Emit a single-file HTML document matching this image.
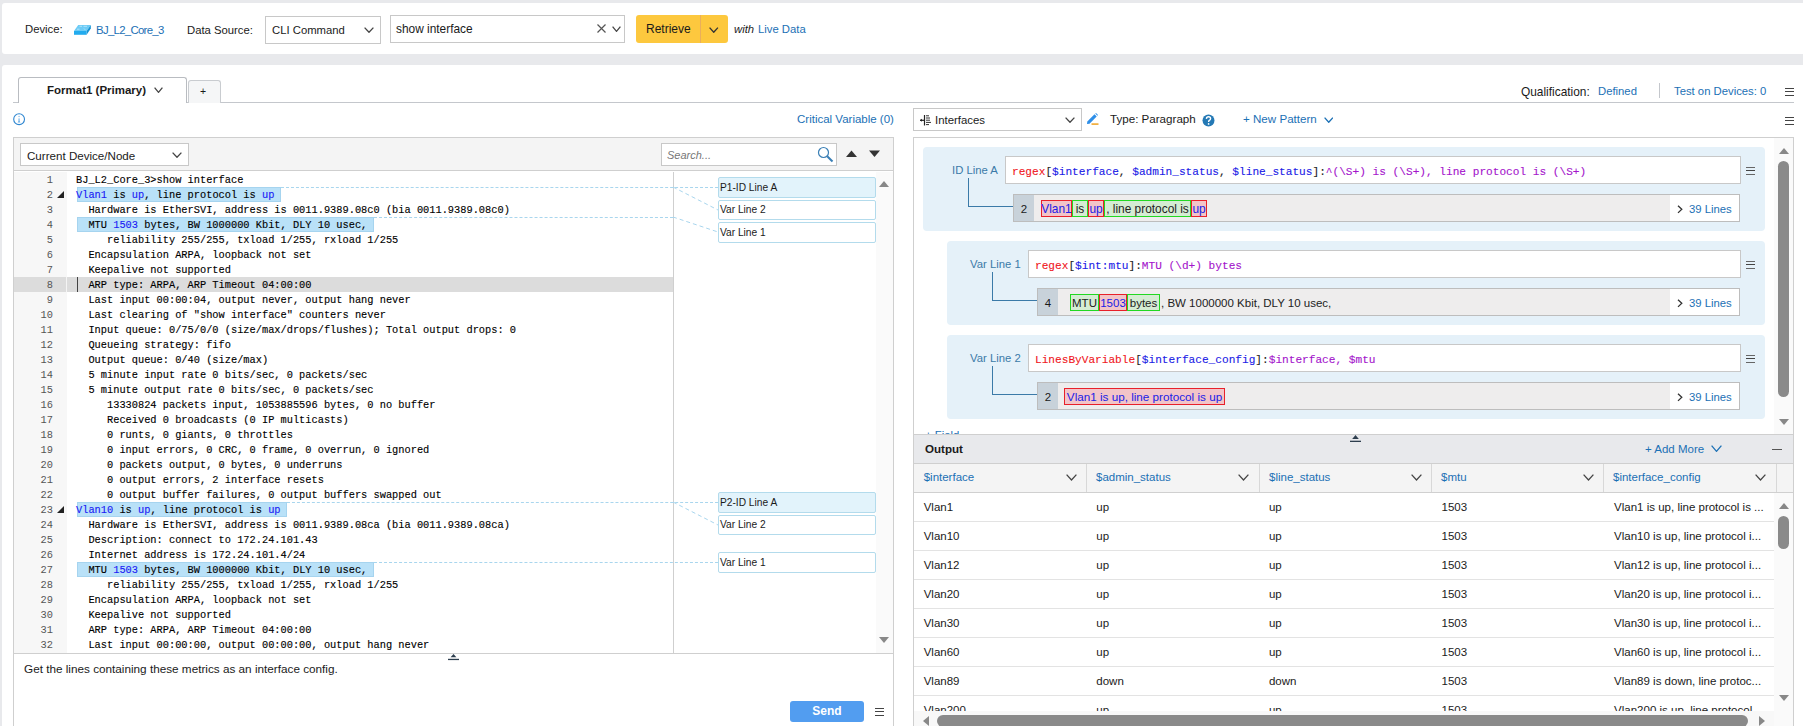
<!DOCTYPE html>
<html><head><meta charset="utf-8">
<style>
*{margin:0;padding:0;box-sizing:border-box}
html,body{width:1803px;height:726px;overflow:hidden;background:#e8e9ec;font-family:"Liberation Sans",sans-serif;font-size:11.3px;color:#1a1a1a}
.a{position:absolute}
.t{position:absolute;white-space:nowrap;line-height:14px}
.lnk{color:#1b70b5}
.box{position:absolute;border:1px solid #c8c8c8;background:#fff}
.chev{position:absolute;width:6px;height:6px;border-right:1.3px solid #444;border-bottom:1.3px solid #444;transform:rotate(45deg)}
.ham{position:absolute;width:9px;height:8.4px;border-top:1.4px solid #444;border-bottom:1.4px solid #444}
.ham:after{content:"";position:absolute;left:0;right:0;top:2.1px;height:1.4px;background:#444}
.mono{font-family:"Liberation Mono",monospace;-webkit-text-stroke:0.12px}
</style></head><body>
<!-- top card -->
<div class="a" style="left:2px;top:3px;width:1820px;height:51px;background:#fff;border-radius:3px"></div>
<div class="t" style="left:25px;top:22px">Device:</div>
<svg class="a" style="left:72px;top:22px" width="22" height="16" viewBox="0 0 22 16"><path d="M6.2 3 H18.8 L14.6 9 H2 Z" fill="#6ccbf6"/><path d="M2 9 H14.6 V12.8 H2 Z" fill="#22abee"/><path d="M14.6 9 L18.8 3 V6.6 L14.6 12.8 Z" fill="#1593d4"/><path d="M7.5 4.3 h2.5 M11.5 4.3 h3.5 M5 7.2 h2.5 M12 6.5 l1.2 1.3" stroke="#b8e6fb" stroke-width="0.9"/></svg>
<div class="t lnk" style="left:96px;top:23px;font-size:11.4px;letter-spacing:-0.7px">BJ_L2_Core_3</div>
<div class="t" style="left:187px;top:23px">Data Source:</div>
<div class="box" style="left:265px;top:16px;width:116px;height:28px"></div>
<div class="t" style="left:272px;top:23px">CLI Command</div>
<svg class="a" style="left:363.5px;top:26.5px" width="10" height="6"><path d="M0.6 0.6 L5.0 5.3 L9.4 0.6" fill="none" stroke="#444" stroke-width="1.3"/></svg>
<div class="box" style="left:390px;top:15px;width:235px;height:28px"></div>
<div class="t" style="left:396px;top:22px;font-size:11.9px">show interface</div>
<svg class="a" style="left:597px;top:24px" width="9" height="9"><path d="M0.5 0.5 L8.5 8.5 M8.5 0.5 L0.5 8.5" stroke="#555" stroke-width="1.2"/></svg>
<svg class="a" style="left:611.5px;top:25.5px" width="9" height="6"><path d="M0.6 0.6 L4.5 5.3 L8.4 0.6" fill="none" stroke="#444" stroke-width="1.3"/></svg>
<div class="a" style="left:636px;top:15px;width:92px;height:28px;background:#fdc83e;border-radius:3px"></div>
<div class="a" style="left:700px;top:15px;width:1px;height:28px;background:#eaae5c"></div>
<div class="t" style="left:646px;top:22px;font-size:12px">Retrieve</div>
<svg class="a" style="left:709.0px;top:26.5px" width="9.5" height="6"><path d="M0.6 0.6 L4.75 5.3 L8.9 0.6" fill="none" stroke="#333" stroke-width="1.3"/></svg>
<div class="t" style="left:734px;top:22px;font-style:italic">with</div>
<div class="t lnk" style="left:758px;top:22px">Live Data</div>

<!-- main card -->
<div class="a" style="left:2px;top:65px;width:1820px;height:700px;background:#fff;border-radius:3px"></div>
<!-- tabs -->
<div class="a" style="left:13px;top:102px;width:1781px;height:1px;background:#c4c7cc"></div>
<div class="a" style="left:18px;top:77px;width:169px;height:26px;background:#fff;border:1px solid #b9bcc1;border-bottom:none;border-radius:3px 3px 0 0"></div>
<div class="t" style="left:47px;top:83px;font-weight:bold;font-size:11.5px;color:#1a1a1a">Format1 (Primary)</div>
<svg class="a" style="left:153.5px;top:87.0px" width="9" height="6"><path d="M0.6 0.6 L4.5 5.3 L8.4 0.6" fill="none" stroke="#444" stroke-width="1.3"/></svg>
<div class="a" style="left:188px;top:80px;width:33px;height:23px;background:#f5f6f7;border:1px solid #c9ccd0;border-bottom:none;border-radius:3px 3px 0 0"></div>
<div class="t" style="left:200px;top:84px;font-size:10.5px">+</div>
<div class="t" style="left:1521px;top:85px;font-size:11.9px">Qualification:</div>
<div class="t lnk" style="left:1598px;top:84px">Defined</div>
<div class="a" style="left:1659px;top:83px;width:1px;height:15px;background:#c4c7cc"></div>
<div class="t lnk" style="left:1674px;top:84px">Test on Devices: 0</div>
<div class="ham" style="left:1785px;top:87.5px"></div>

<!-- row 2 -->
<svg class="a" style="left:13px;top:113px" width="13" height="13" viewBox="0 0 13 13"><circle cx="6.1" cy="6.2" r="5.4" fill="none" stroke="#2e86d0" stroke-width="1.1"/><rect x="5.5" y="5.4" width="1.1" height="3.2" fill="#6aaee6"/><path d="M4.6 9.4 L6.05 7.5 L7.5 9.4 Z" fill="#6aaee6"/><circle cx="6.05" cy="3.6" r="0.75" fill="#8cc0ec"/></svg>
<div class="t lnk" style="left:797px;top:112px;font-size:11.5px">Critical Variable (0)</div>
<div class="ham" style="left:1785px;top:116.5px"></div>

<div class="a" style="left:13px;top:137px;width:881px;height:620px;border:1px solid #cfcfcf;background:#fff"></div>
<div class="a" style="left:14px;top:138px;width:879px;height:33px;background:#f4f4f4;border-bottom:1px solid #cfcfcf"></div>
<div class="box" style="left:20px;top:143px;width:169px;height:23px"></div>
<div class="t" style="left:27px;top:149px;font-size:11.6px">Current Device/Node</div>
<svg class="a" style="left:171.5px;top:151.5px" width="10" height="6"><path d="M0.6 0.6 L5.0 5.3 L9.4 0.6" fill="none" stroke="#444" stroke-width="1.3"/></svg>
<div class="box" style="left:661px;top:143px;width:176px;height:23px"></div>
<div class="t" style="left:667px;top:148px;font-style:italic;color:#777;font-size:11px">Search...</div>
<svg class="a" style="left:817px;top:146px" width="17" height="17" viewBox="0 0 17 17"><circle cx="6.5" cy="6.5" r="5" fill="none" stroke="#3a7fb5" stroke-width="1.2"/><path d="M10.2 10.2 L15.5 15.5" stroke="#3a7fb5" stroke-width="2"/></svg>
<svg class="a" style="left:846px;top:150px" width="12" height="8"><path d="M0 7 L5.5 0.5 L11 7 Z" fill="#333"/></svg>
<svg class="a" style="left:869px;top:150px" width="12" height="8"><path d="M0 0.5 L5.5 7 L11 0.5 Z" fill="#333"/></svg>
<div class="a" style="left:14px;top:172px;width:53px;height:481px;background:#f7f7f7"></div>
<div class="a" style="left:14px;top:277px;width:659px;height:15px;background:#dcdcdc"></div>
<div class="a" style="left:66px;top:277px;width:1px;height:15px;background:#f4f4f4"></div>
<div class="a" style="left:77px;top:277px;width:1px;height:15px;background:#444"></div>
<div class="a" style="left:14px;top:653px;width:879px;height:1px;background:#cfcfcf"></div>
<div class="a" style="left:673px;top:172px;width:1px;height:481px;background:#cfcfcf"></div>
<div class="a" style="left:876px;top:172px;width:17px;height:481px;background:#fafafa"></div>
<div class="a" style="left:77.0px;top:187px;width:203.6px;height:15px;background:#b9e1f8;border:1px solid #a6d4ef"></div>
<div class="a" style="left:77.0px;top:217px;width:296.6px;height:15px;background:#b9e1f8;border:1px solid #a6d4ef"></div>
<div class="a" style="left:77.0px;top:502px;width:209.8px;height:15px;background:#b9e1f8;border:1px solid #a6d4ef"></div>
<div class="a" style="left:77.0px;top:562px;width:296.6px;height:15px;background:#b9e1f8;border:1px solid #a6d4ef"></div>
<div class="a" style="left:281px;top:187px;width:437px;height:0;border-top:1px dashed #a9d6ee"></div>
<svg class="a" style="left:673px;top:186px" width="45" height="25"><path d="M0 1 L45 24" stroke="#a9d6ee" stroke-width="1" stroke-dasharray="4 3"/></svg>
<div class="a" style="left:374px;top:217px;width:299px;height:0;border-top:1px dashed #a9d6ee"></div>
<svg class="a" style="left:673px;top:216px" width="45" height="17"><path d="M0 1 L45 16" stroke="#a9d6ee" stroke-width="1" stroke-dasharray="4 3"/></svg>
<div class="a" style="left:287px;top:502px;width:431px;height:0;border-top:1px dashed #a9d6ee"></div>
<svg class="a" style="left:673px;top:501px" width="45" height="25"><path d="M0 1 L45 24" stroke="#a9d6ee" stroke-width="1" stroke-dasharray="4 3"/></svg>
<div class="a" style="left:374px;top:562px;width:344px;height:0;border-top:1px dashed #a9d6ee"></div>
<div class="a" style="left:718px;top:177px;width:158px;height:21px;background:#e2f3fb;border:1px solid #b3dbec;border-radius:2px"></div><div class="t" style="left:720px;top:180.5px;font-size:10.2px">P1-ID Line A</div>
<div class="a" style="left:718px;top:200px;width:158px;height:20px;background:#fff;border:1px solid #b3dbec;border-radius:2px"></div><div class="t" style="left:720px;top:203.0px;font-size:10.2px">Var Line 2</div>
<div class="a" style="left:718px;top:222px;width:158px;height:21px;background:#fff;border:1px solid #b3dbec;border-radius:2px"></div><div class="t" style="left:720px;top:225.5px;font-size:10.2px">Var Line 1</div>
<div class="a" style="left:718px;top:492px;width:158px;height:21px;background:#e2f3fb;border:1px solid #b3dbec;border-radius:2px"></div><div class="t" style="left:720px;top:495.5px;font-size:10.2px">P2-ID Line A</div>
<div class="a" style="left:718px;top:515px;width:158px;height:20px;background:#fff;border:1px solid #b3dbec;border-radius:2px"></div><div class="t" style="left:720px;top:518.0px;font-size:10.2px">Var Line 2</div>
<div class="a" style="left:718px;top:552px;width:158px;height:21px;background:#fff;border:1px solid #b3dbec;border-radius:2px"></div><div class="t" style="left:720px;top:555.5px;font-size:10.2px">Var Line 1</div>
<svg class="a" style="left:879px;top:181px" width="10" height="6"><path d="M0 6 L5 0 L10 6 Z" fill="#888"/></svg>
<svg class="a" style="left:879px;top:637px" width="10" height="6"><path d="M0 0 L5 6 L10 0 Z" fill="#888"/></svg>
<div class="t mono" style="left:14px;top:173px;width:39px;text-align:right;line-height:15px;font-size:10.33px;color:#555;-webkit-text-stroke:0">1</div>
<div class="t mono" style="left:76px;top:173px;line-height:15px;font-size:10.33px;color:#000;white-space:pre">BJ_L2_Core_3&gt;show interface</div>
<div class="t mono" style="left:14px;top:188px;width:39px;text-align:right;line-height:15px;font-size:10.33px;color:#555;-webkit-text-stroke:0">2</div>
<svg class="a" style="left:57px;top:191px" width="7" height="7"><path d="M0 7 L7 0 L7 7 Z" fill="#222"/></svg>
<div class="t mono" style="left:76px;top:188px;line-height:15px;font-size:10.33px;color:#000;white-space:pre"><span style="color:#1a1af5">Vlan1</span> is <span style="color:#1a1af5">up</span>, line protocol is <span style="color:#1a1af5">up</span></div>
<div class="t mono" style="left:14px;top:203px;width:39px;text-align:right;line-height:15px;font-size:10.33px;color:#555;-webkit-text-stroke:0">3</div>
<div class="t mono" style="left:76px;top:203px;line-height:15px;font-size:10.33px;color:#000;white-space:pre">  Hardware is EtherSVI, address is 0011.9389.08c0 (bia 0011.9389.08c0)</div>
<div class="t mono" style="left:14px;top:218px;width:39px;text-align:right;line-height:15px;font-size:10.33px;color:#555;-webkit-text-stroke:0">4</div>
<div class="t mono" style="left:76px;top:218px;line-height:15px;font-size:10.33px;color:#000;white-space:pre">  MTU <span style="color:#1a1af5">1503</span> bytes, BW 1000000 Kbit, DLY 10 usec,</div>
<div class="t mono" style="left:14px;top:233px;width:39px;text-align:right;line-height:15px;font-size:10.33px;color:#555;-webkit-text-stroke:0">5</div>
<div class="t mono" style="left:76px;top:233px;line-height:15px;font-size:10.33px;color:#000;white-space:pre">     reliability 255/255, txload 1/255, rxload 1/255</div>
<div class="t mono" style="left:14px;top:248px;width:39px;text-align:right;line-height:15px;font-size:10.33px;color:#555;-webkit-text-stroke:0">6</div>
<div class="t mono" style="left:76px;top:248px;line-height:15px;font-size:10.33px;color:#000;white-space:pre">  Encapsulation ARPA, loopback not set</div>
<div class="t mono" style="left:14px;top:263px;width:39px;text-align:right;line-height:15px;font-size:10.33px;color:#555;-webkit-text-stroke:0">7</div>
<div class="t mono" style="left:76px;top:263px;line-height:15px;font-size:10.33px;color:#000;white-space:pre">  Keepalive not supported</div>
<div class="t mono" style="left:14px;top:278px;width:39px;text-align:right;line-height:15px;font-size:10.33px;color:#555;-webkit-text-stroke:0">8</div>
<div class="t mono" style="left:76px;top:278px;line-height:15px;font-size:10.33px;color:#000;white-space:pre">  ARP type: ARPA, ARP Timeout 04:00:00</div>
<div class="t mono" style="left:14px;top:293px;width:39px;text-align:right;line-height:15px;font-size:10.33px;color:#555;-webkit-text-stroke:0">9</div>
<div class="t mono" style="left:76px;top:293px;line-height:15px;font-size:10.33px;color:#000;white-space:pre">  Last input 00:00:04, output never, output hang never</div>
<div class="t mono" style="left:14px;top:308px;width:39px;text-align:right;line-height:15px;font-size:10.33px;color:#555;-webkit-text-stroke:0">10</div>
<div class="t mono" style="left:76px;top:308px;line-height:15px;font-size:10.33px;color:#000;white-space:pre">  Last clearing of &quot;show interface&quot; counters never</div>
<div class="t mono" style="left:14px;top:323px;width:39px;text-align:right;line-height:15px;font-size:10.33px;color:#555;-webkit-text-stroke:0">11</div>
<div class="t mono" style="left:76px;top:323px;line-height:15px;font-size:10.33px;color:#000;white-space:pre">  Input queue: 0/75/0/0 (size/max/drops/flushes); Total output drops: 0</div>
<div class="t mono" style="left:14px;top:338px;width:39px;text-align:right;line-height:15px;font-size:10.33px;color:#555;-webkit-text-stroke:0">12</div>
<div class="t mono" style="left:76px;top:338px;line-height:15px;font-size:10.33px;color:#000;white-space:pre">  Queueing strategy: fifo</div>
<div class="t mono" style="left:14px;top:353px;width:39px;text-align:right;line-height:15px;font-size:10.33px;color:#555;-webkit-text-stroke:0">13</div>
<div class="t mono" style="left:76px;top:353px;line-height:15px;font-size:10.33px;color:#000;white-space:pre">  Output queue: 0/40 (size/max)</div>
<div class="t mono" style="left:14px;top:368px;width:39px;text-align:right;line-height:15px;font-size:10.33px;color:#555;-webkit-text-stroke:0">14</div>
<div class="t mono" style="left:76px;top:368px;line-height:15px;font-size:10.33px;color:#000;white-space:pre">  5 minute input rate 0 bits/sec, 0 packets/sec</div>
<div class="t mono" style="left:14px;top:383px;width:39px;text-align:right;line-height:15px;font-size:10.33px;color:#555;-webkit-text-stroke:0">15</div>
<div class="t mono" style="left:76px;top:383px;line-height:15px;font-size:10.33px;color:#000;white-space:pre">  5 minute output rate 0 bits/sec, 0 packets/sec</div>
<div class="t mono" style="left:14px;top:398px;width:39px;text-align:right;line-height:15px;font-size:10.33px;color:#555;-webkit-text-stroke:0">16</div>
<div class="t mono" style="left:76px;top:398px;line-height:15px;font-size:10.33px;color:#000;white-space:pre">     13330824 packets input, 1053885596 bytes, 0 no buffer</div>
<div class="t mono" style="left:14px;top:413px;width:39px;text-align:right;line-height:15px;font-size:10.33px;color:#555;-webkit-text-stroke:0">17</div>
<div class="t mono" style="left:76px;top:413px;line-height:15px;font-size:10.33px;color:#000;white-space:pre">     Received 0 broadcasts (0 IP multicasts)</div>
<div class="t mono" style="left:14px;top:428px;width:39px;text-align:right;line-height:15px;font-size:10.33px;color:#555;-webkit-text-stroke:0">18</div>
<div class="t mono" style="left:76px;top:428px;line-height:15px;font-size:10.33px;color:#000;white-space:pre">     0 runts, 0 giants, 0 throttles</div>
<div class="t mono" style="left:14px;top:443px;width:39px;text-align:right;line-height:15px;font-size:10.33px;color:#555;-webkit-text-stroke:0">19</div>
<div class="t mono" style="left:76px;top:443px;line-height:15px;font-size:10.33px;color:#000;white-space:pre">     0 input errors, 0 CRC, 0 frame, 0 overrun, 0 ignored</div>
<div class="t mono" style="left:14px;top:458px;width:39px;text-align:right;line-height:15px;font-size:10.33px;color:#555;-webkit-text-stroke:0">20</div>
<div class="t mono" style="left:76px;top:458px;line-height:15px;font-size:10.33px;color:#000;white-space:pre">     0 packets output, 0 bytes, 0 underruns</div>
<div class="t mono" style="left:14px;top:473px;width:39px;text-align:right;line-height:15px;font-size:10.33px;color:#555;-webkit-text-stroke:0">21</div>
<div class="t mono" style="left:76px;top:473px;line-height:15px;font-size:10.33px;color:#000;white-space:pre">     0 output errors, 2 interface resets</div>
<div class="t mono" style="left:14px;top:488px;width:39px;text-align:right;line-height:15px;font-size:10.33px;color:#555;-webkit-text-stroke:0">22</div>
<div class="t mono" style="left:76px;top:488px;line-height:15px;font-size:10.33px;color:#000;white-space:pre">     0 output buffer failures, 0 output buffers swapped out</div>
<div class="t mono" style="left:14px;top:503px;width:39px;text-align:right;line-height:15px;font-size:10.33px;color:#555;-webkit-text-stroke:0">23</div>
<svg class="a" style="left:57px;top:506px" width="7" height="7"><path d="M0 7 L7 0 L7 7 Z" fill="#222"/></svg>
<div class="t mono" style="left:76px;top:503px;line-height:15px;font-size:10.33px;color:#000;white-space:pre"><span style="color:#1a1af5">Vlan10</span> is <span style="color:#1a1af5">up</span>, line protocol is <span style="color:#1a1af5">up</span></div>
<div class="t mono" style="left:14px;top:518px;width:39px;text-align:right;line-height:15px;font-size:10.33px;color:#555;-webkit-text-stroke:0">24</div>
<div class="t mono" style="left:76px;top:518px;line-height:15px;font-size:10.33px;color:#000;white-space:pre">  Hardware is EtherSVI, address is 0011.9389.08ca (bia 0011.9389.08ca)</div>
<div class="t mono" style="left:14px;top:533px;width:39px;text-align:right;line-height:15px;font-size:10.33px;color:#555;-webkit-text-stroke:0">25</div>
<div class="t mono" style="left:76px;top:533px;line-height:15px;font-size:10.33px;color:#000;white-space:pre">  Description: connect to 172.24.101.43</div>
<div class="t mono" style="left:14px;top:548px;width:39px;text-align:right;line-height:15px;font-size:10.33px;color:#555;-webkit-text-stroke:0">26</div>
<div class="t mono" style="left:76px;top:548px;line-height:15px;font-size:10.33px;color:#000;white-space:pre">  Internet address is 172.24.101.4/24</div>
<div class="t mono" style="left:14px;top:563px;width:39px;text-align:right;line-height:15px;font-size:10.33px;color:#555;-webkit-text-stroke:0">27</div>
<div class="t mono" style="left:76px;top:563px;line-height:15px;font-size:10.33px;color:#000;white-space:pre">  MTU <span style="color:#1a1af5">1503</span> bytes, BW 1000000 Kbit, DLY 10 usec,</div>
<div class="t mono" style="left:14px;top:578px;width:39px;text-align:right;line-height:15px;font-size:10.33px;color:#555;-webkit-text-stroke:0">28</div>
<div class="t mono" style="left:76px;top:578px;line-height:15px;font-size:10.33px;color:#000;white-space:pre">     reliability 255/255, txload 1/255, rxload 1/255</div>
<div class="t mono" style="left:14px;top:593px;width:39px;text-align:right;line-height:15px;font-size:10.33px;color:#555;-webkit-text-stroke:0">29</div>
<div class="t mono" style="left:76px;top:593px;line-height:15px;font-size:10.33px;color:#000;white-space:pre">  Encapsulation ARPA, loopback not set</div>
<div class="t mono" style="left:14px;top:608px;width:39px;text-align:right;line-height:15px;font-size:10.33px;color:#555;-webkit-text-stroke:0">30</div>
<div class="t mono" style="left:76px;top:608px;line-height:15px;font-size:10.33px;color:#000;white-space:pre">  Keepalive not supported</div>
<div class="t mono" style="left:14px;top:623px;width:39px;text-align:right;line-height:15px;font-size:10.33px;color:#555;-webkit-text-stroke:0">31</div>
<div class="t mono" style="left:76px;top:623px;line-height:15px;font-size:10.33px;color:#000;white-space:pre">  ARP type: ARPA, ARP Timeout 04:00:00</div>
<div class="t mono" style="left:14px;top:638px;width:39px;text-align:right;line-height:15px;font-size:10.33px;color:#555;-webkit-text-stroke:0">32</div>
<div class="t mono" style="left:76px;top:638px;line-height:15px;font-size:10.33px;color:#000;white-space:pre">  Last input 00:00:00, output 00:00:00, output hang never</div>
<svg class="a" style="left:448px;top:653px" width="11" height="8"><path d="M2.6 4.2 L5.5 1 L8.4 4.2 Z" fill="#2d3e4e"/><rect x="0" y="5.8" width="11" height="1.3" fill="#2d3e4e"/></svg>
<div class="t" style="left:24px;top:662px;font-size:11.74px">Get the lines containing these metrics as an interface config.</div>
<div class="a" style="left:790px;top:701px;width:74px;height:21px;background:#529df0;border-radius:3px"></div>
<div class="t" style="left:790px;top:704px;width:74px;text-align:center;color:#fff;font-weight:bold;font-size:12px">Send</div>
<div class="ham" style="left:875px;top:707.5px"></div>

<div class="box" style="left:913px;top:108px;width:169px;height:23px"></div>
<svg class="a" style="left:920px;top:115px" width="12" height="11" viewBox="0 0 12 11"><path d="M4.5 0 V10.5" stroke="#222" stroke-width="1.2"/><path d="M0 5.3 H4.5" stroke="#222" stroke-width="1.2"/><path d="M0 5.3 L2 3.8 V6.8 Z" fill="#222"/><path d="M6 0.8 H9 M6 3 H10 M6 5.2 H10 M6 7.4 H11 M6 9.6 H9" stroke="#333" stroke-width="1"/></svg>
<div class="t" style="left:935px;top:113px;font-size:11.4px">Interfaces</div>
<svg class="a" style="left:1064.5px;top:117.0px" width="10" height="6"><path d="M0.6 0.6 L5.0 5.3 L9.4 0.6" fill="none" stroke="#444" stroke-width="1.3"/></svg>
<svg class="a" style="left:1086px;top:113px" width="14" height="13" viewBox="0 0 14 13"><path d="M1 11 L1.3 8.5 L8.5 1.3 L10.7 3.5 L3.5 10.7 Z" fill="#2d8ee8"/><path d="M9.3 0.5 L10 0 L12 2 L11.4 2.8 Z" fill="#2d8ee8"/><rect x="5.5" y="10.3" width="7" height="1.6" fill="#f0a830"/></svg>
<div class="t" style="left:1110px;top:112px;font-size:11.6px">Type: Paragraph</div>
<svg class="a" style="left:1202px;top:114px" width="13" height="13" viewBox="0 0 13 13"><circle cx="6.5" cy="6.5" r="6" fill="#2479b5"/><path d="M4.4 4.9 Q4.5 2.8 6.5 2.8 Q8.6 2.8 8.6 4.6 Q8.6 5.8 7.3 6.4 Q6.6 6.8 6.6 7.9" fill="none" stroke="#fff" stroke-width="1.4"/><circle cx="6.6" cy="9.9" r="0.85" fill="#fff"/></svg>
<div class="t lnk" style="left:1243px;top:112px;font-size:11.6px">+ New Pattern</div>
<svg class="a" style="left:1323.5px;top:117.0px" width="9.5" height="6"><path d="M0.6 0.6 L4.75 5.3 L8.9 0.6" fill="none" stroke="#1b70b5" stroke-width="1.3"/></svg>
<div class="a" style="left:913px;top:137px;width:881px;height:620px;border:1px solid #cfcfcf;background:#fff"></div>
<div class="a" style="left:1774px;top:138px;width:19px;height:296px;background:#fafafa"></div>
<svg class="a" style="left:1779px;top:148px" width="10" height="6"><path d="M0 6 L5 0 L10 6 Z" fill="#888"/></svg>
<div class="a" style="left:1778px;top:161px;width:11px;height:236px;background:#8a8a8a;border-radius:6px"></div>
<svg class="a" style="left:1779px;top:419px" width="10" height="6"><path d="M0 0 L5 6 L10 0 Z" fill="#888"/></svg>
<div class="a" style="left:923px;top:147px;width:842px;height:84px;background:#e5f1f9;border-radius:4px"></div>
<div class="t" style="left:952px;top:163px;color:#3b7aa8;font-size:11.3px">ID Line A</div>
<div class="a" style="left:968px;top:178px;width:45px;height:29px;border-left:1px solid #3b7aa8;border-bottom:1px solid #3b7aa8"></div>
<div class="box" style="left:1005px;top:156px;width:736px;height:28px"></div>
<div class="t mono" style="left:1012px;top:164.5px;font-size:11.13px;-webkit-text-stroke:0.1px"><span style="color:#f0161c">regex</span><span style="color:#222">[</span><span style="color:#2020e6">$interface</span><span style="color:#222">, </span><span style="color:#2020e6">$admin_status</span><span style="color:#222">, </span><span style="color:#2020e6">$line_status</span><span style="color:#222">]:</span><span style="color:#a414cc">^(\S+) is (\S+), line protocol is (\S+)</span></div>
<div class="ham" style="left:1746px;top:166.5px;border-color:#666"></div>
<div class="a" style="left:1013px;top:194px;width:727px;height:28px;background:#eeeded;border:1px solid #bdbdbd"></div>
<div class="a" style="left:1014px;top:195px;width:20px;height:26px;background:#c8d2da"></div>
<div class="t" style="left:1014px;top:202px;width:20px;text-align:center;font-size:11.5px">2</div>
<div class="a" style="left:1670px;top:195px;width:69px;height:26px;background:#fff"></div>
<svg class="a" style="left:1677px;top:205px" width="7" height="9"><path d="M1 0.7 L4.8 4.3 L1 7.9" fill="none" stroke="#333" stroke-width="1.3"/></svg>
<div class="t lnk" style="left:1689px;top:202px;font-size:11.3px">39 Lines</div>
<div class="a" style="left:1041px;top:200px;width:31px;height:17px;background:#f2c4c8;border:1.3px solid #e8202a"></div>
<div class="a" style="left:1072px;top:200px;width:16px;height:17px;background:#d5ecd3;border:1.3px solid #22d822"></div>
<div class="a" style="left:1088px;top:200px;width:16px;height:17px;background:#f2c4c8;border:1.3px solid #e8202a"></div>
<div class="a" style="left:1104px;top:200px;width:87px;height:17px;background:#d5ecd3;border:1.3px solid #22d822"></div>
<div class="a" style="left:1191px;top:200px;width:16px;height:17px;background:#f2c4c8;border:1.3px solid #e8202a"></div>
<div class="t" style="left:1041px;top:202px;width:31px;text-align:center;color:#2020e6;font-size:11.9px;white-space:pre">Vlan1</div>
<div class="t" style="left:1072px;top:202px;width:16px;text-align:center;color:#222;font-size:11.9px;white-space:pre">is</div>
<div class="t" style="left:1088px;top:202px;width:16px;text-align:center;color:#2020e6;font-size:11.9px;white-space:pre">up</div>
<div class="t" style="left:1104px;top:202px;width:87px;text-align:center;color:#222;font-size:11.9px;white-space:pre">, line protocol is</div>
<div class="t" style="left:1191px;top:202px;width:16px;text-align:center;color:#2020e6;font-size:11.9px;white-space:pre">up</div>
<div class="a" style="left:947px;top:241px;width:818px;height:84px;background:#e5f1f9;border-radius:4px"></div>
<div class="t" style="left:970px;top:257px;color:#3b7aa8;font-size:11.3px">Var Line 1</div>
<div class="a" style="left:992px;top:272px;width:45px;height:29px;border-left:1px solid #3b7aa8;border-bottom:1px solid #3b7aa8"></div>
<div class="box" style="left:1028px;top:250px;width:713px;height:28px"></div>
<div class="t mono" style="left:1035px;top:258.5px;font-size:11.13px;-webkit-text-stroke:0.1px"><span style="color:#f0161c">regex</span><span style="color:#222">[</span><span style="color:#2020e6">$int:mtu</span><span style="color:#222">]:</span><span style="color:#a414cc">MTU (\d+) bytes</span></div>
<div class="ham" style="left:1746px;top:260.5px;border-color:#666"></div>
<div class="a" style="left:1037px;top:288px;width:703px;height:28px;background:#eeeded;border:1px solid #bdbdbd"></div>
<div class="a" style="left:1038px;top:289px;width:20px;height:26px;background:#c8d2da"></div>
<div class="t" style="left:1038px;top:296px;width:20px;text-align:center;font-size:11.5px">4</div>
<div class="a" style="left:1670px;top:289px;width:69px;height:26px;background:#fff"></div>
<svg class="a" style="left:1677px;top:299px" width="7" height="9"><path d="M1 0.7 L4.8 4.3 L1 7.9" fill="none" stroke="#333" stroke-width="1.3"/></svg>
<div class="t lnk" style="left:1689px;top:296px;font-size:11.3px">39 Lines</div>
<div class="a" style="left:1070px;top:294px;width:29px;height:17px;background:#d5ecd3;border:1.3px solid #22d822"></div>
<div class="a" style="left:1099px;top:294px;width:28px;height:17px;background:#f2c4c8;border:1.3px solid #e8202a"></div>
<div class="a" style="left:1127px;top:294px;width:33px;height:17px;background:#d5ecd3;border:1.3px solid #22d822"></div>
<div class="t" style="left:1070px;top:296px;width:29px;text-align:center;color:#222;font-size:11.5px;white-space:pre">MTU</div>
<div class="t" style="left:1099px;top:296px;width:28px;text-align:center;color:#2020e6;font-size:11.5px;white-space:pre">1503</div>
<div class="t" style="left:1127px;top:296px;width:33px;text-align:center;color:#222;font-size:11.5px;white-space:pre">bytes</div>
<div class="t" style="left:1161px;top:296px;color:#222;font-size:11.5px">, BW 1000000 Kbit, DLY 10 usec,</div>
<div class="a" style="left:947px;top:335px;width:818px;height:84px;background:#e5f1f9;border-radius:4px"></div>
<div class="t" style="left:970px;top:351px;color:#3b7aa8;font-size:11.3px">Var Line 2</div>
<div class="a" style="left:992px;top:366px;width:45px;height:29px;border-left:1px solid #3b7aa8;border-bottom:1px solid #3b7aa8"></div>
<div class="box" style="left:1028px;top:344px;width:713px;height:28px"></div>
<div class="t mono" style="left:1035px;top:352.5px;font-size:11.13px;-webkit-text-stroke:0.1px"><span style="color:#f0161c">LinesByVariable</span><span style="color:#222">[</span><span style="color:#2020e6">$interface_config</span><span style="color:#222">]:</span><span style="color:#a414cc">$interface, $mtu</span></div>
<div class="ham" style="left:1746px;top:354.5px;border-color:#666"></div>
<div class="a" style="left:1037px;top:382px;width:703px;height:28px;background:#eeeded;border:1px solid #bdbdbd"></div>
<div class="a" style="left:1038px;top:383px;width:20px;height:26px;background:#c8d2da"></div>
<div class="t" style="left:1038px;top:390px;width:20px;text-align:center;font-size:11.5px">2</div>
<div class="a" style="left:1670px;top:383px;width:69px;height:26px;background:#fff"></div>
<svg class="a" style="left:1677px;top:393px" width="7" height="9"><path d="M1 0.7 L4.8 4.3 L1 7.9" fill="none" stroke="#333" stroke-width="1.3"/></svg>
<div class="t lnk" style="left:1689px;top:390px;font-size:11.3px">39 Lines</div>
<div class="a" style="left:1064px;top:388px;width:161px;height:17px;background:#f2c4c8;border:1.3px solid #e8202a"></div>
<div class="t" style="left:1064px;top:390px;width:161px;text-align:center;color:#2020e6;font-size:11.7px;white-space:pre">Vlan1 is up, line protocol is up</div>
<div class="t lnk" style="left:925px;top:428px;font-size:11.3px">+ Field ⌄</div>
<div class="a" style="left:914px;top:434px;width:879px;height:30px;background:#e8e9ec;border-top:1px solid #cfcfcf;border-bottom:1px solid #cfcfcf"></div>
<svg class="a" style="left:1350px;top:434px" width="11" height="9"><path d="M2.2 4.9 L5.5 1.1 L8.8 4.9 Z" fill="#2d3e4e"/><rect x="0" y="6.7" width="11" height="1.3" fill="#2d3e4e"/></svg>
<div class="t" style="left:925px;top:442px;font-weight:bold;font-size:11.6px">Output</div>
<div class="t lnk" style="left:1645px;top:442px;font-size:11.5px">+ Add More</div>
<svg class="a" style="left:1710.5px;top:445.0px" width="11" height="7"><path d="M0.6 0.6 L5.5 6.3 L10.4 0.6" fill="none" stroke="#1b70b5" stroke-width="1.3"/></svg>
<div class="a" style="left:1772px;top:449px;width:10px;height:1.3px;background:#555"></div>
<div class="a" style="left:914px;top:464px;width:879px;height:29px;background:#f4f4f4;border-bottom:1px solid #d0d0d0"></div>
<div class="t lnk" style="left:923.7px;top:470px;font-size:11.5px">$interface</div>
<svg class="a" style="left:1066px;top:474px" width="11" height="7"><path d="M0.6 0.6 L5.5 6 L10.4 0.6" fill="none" stroke="#444" stroke-width="1.3"/></svg>
<div class="a" style="left:1086px;top:464px;width:1px;height:28px;background:#d8d8d8"></div>
<div class="t lnk" style="left:1096.0px;top:470px;font-size:11.5px">$admin_status</div>
<svg class="a" style="left:1238px;top:474px" width="11" height="7"><path d="M0.6 0.6 L5.5 6 L10.4 0.6" fill="none" stroke="#444" stroke-width="1.3"/></svg>
<div class="a" style="left:1259px;top:464px;width:1px;height:28px;background:#d8d8d8"></div>
<div class="t lnk" style="left:1269.0px;top:470px;font-size:11.5px">$line_status</div>
<svg class="a" style="left:1411px;top:474px" width="11" height="7"><path d="M0.6 0.6 L5.5 6 L10.4 0.6" fill="none" stroke="#444" stroke-width="1.3"/></svg>
<div class="a" style="left:1431px;top:464px;width:1px;height:28px;background:#d8d8d8"></div>
<div class="t lnk" style="left:1441.0px;top:470px;font-size:11.5px">$mtu</div>
<svg class="a" style="left:1583px;top:474px" width="11" height="7"><path d="M0.6 0.6 L5.5 6 L10.4 0.6" fill="none" stroke="#444" stroke-width="1.3"/></svg>
<div class="a" style="left:1603px;top:464px;width:1px;height:28px;background:#d8d8d8"></div>
<div class="t lnk" style="left:1613.0px;top:470px;font-size:11.5px">$interface_config</div>
<svg class="a" style="left:1755px;top:474px" width="11" height="7"><path d="M0.6 0.6 L5.5 6 L10.4 0.6" fill="none" stroke="#444" stroke-width="1.3"/></svg>
<div class="a" style="left:1776px;top:464px;width:1px;height:28px;background:#d8d8d8"></div>
<div class="t" style="left:923.7px;top:500px;font-size:11.5px">Vlan1</div>
<div class="t" style="left:1096.3px;top:500px;font-size:11.5px">up</div>
<div class="t" style="left:1268.9px;top:500px;font-size:11.5px">up</div>
<div class="t" style="left:1441.5px;top:500px;font-size:11.5px">1503</div>
<div class="t" style="left:1614.1px;top:500px;font-size:11.5px">Vlan1 is up, line protocol is ...</div>
<div class="a" style="left:914px;top:521px;width:860px;height:1px;background:#e3e3e3"></div>
<div class="t" style="left:923.7px;top:529px;font-size:11.5px">Vlan10</div>
<div class="t" style="left:1096.3px;top:529px;font-size:11.5px">up</div>
<div class="t" style="left:1268.9px;top:529px;font-size:11.5px">up</div>
<div class="t" style="left:1441.5px;top:529px;font-size:11.5px">1503</div>
<div class="t" style="left:1614.1px;top:529px;font-size:11.5px">Vlan10 is up, line protocol i...</div>
<div class="a" style="left:914px;top:550px;width:860px;height:1px;background:#e3e3e3"></div>
<div class="t" style="left:923.7px;top:558px;font-size:11.5px">Vlan12</div>
<div class="t" style="left:1096.3px;top:558px;font-size:11.5px">up</div>
<div class="t" style="left:1268.9px;top:558px;font-size:11.5px">up</div>
<div class="t" style="left:1441.5px;top:558px;font-size:11.5px">1503</div>
<div class="t" style="left:1614.1px;top:558px;font-size:11.5px">Vlan12 is up, line protocol i...</div>
<div class="a" style="left:914px;top:579px;width:860px;height:1px;background:#e3e3e3"></div>
<div class="t" style="left:923.7px;top:587px;font-size:11.5px">Vlan20</div>
<div class="t" style="left:1096.3px;top:587px;font-size:11.5px">up</div>
<div class="t" style="left:1268.9px;top:587px;font-size:11.5px">up</div>
<div class="t" style="left:1441.5px;top:587px;font-size:11.5px">1503</div>
<div class="t" style="left:1614.1px;top:587px;font-size:11.5px">Vlan20 is up, line protocol i...</div>
<div class="a" style="left:914px;top:608px;width:860px;height:1px;background:#e3e3e3"></div>
<div class="t" style="left:923.7px;top:616px;font-size:11.5px">Vlan30</div>
<div class="t" style="left:1096.3px;top:616px;font-size:11.5px">up</div>
<div class="t" style="left:1268.9px;top:616px;font-size:11.5px">up</div>
<div class="t" style="left:1441.5px;top:616px;font-size:11.5px">1503</div>
<div class="t" style="left:1614.1px;top:616px;font-size:11.5px">Vlan30 is up, line protocol i...</div>
<div class="a" style="left:914px;top:637px;width:860px;height:1px;background:#e3e3e3"></div>
<div class="t" style="left:923.7px;top:645px;font-size:11.5px">Vlan60</div>
<div class="t" style="left:1096.3px;top:645px;font-size:11.5px">up</div>
<div class="t" style="left:1268.9px;top:645px;font-size:11.5px">up</div>
<div class="t" style="left:1441.5px;top:645px;font-size:11.5px">1503</div>
<div class="t" style="left:1614.1px;top:645px;font-size:11.5px">Vlan60 is up, line protocol i...</div>
<div class="a" style="left:914px;top:666px;width:860px;height:1px;background:#e3e3e3"></div>
<div class="t" style="left:923.7px;top:674px;font-size:11.5px">Vlan89</div>
<div class="t" style="left:1096.3px;top:674px;font-size:11.5px">down</div>
<div class="t" style="left:1268.9px;top:674px;font-size:11.5px">down</div>
<div class="t" style="left:1441.5px;top:674px;font-size:11.5px">1503</div>
<div class="t" style="left:1614.1px;top:674px;font-size:11.5px">Vlan89 is down, line protoc...</div>
<div class="a" style="left:914px;top:695px;width:860px;height:1px;background:#e3e3e3"></div>
<div class="t" style="left:923.7px;top:703px;font-size:11.5px">Vlan200</div>
<div class="t" style="left:1096.3px;top:703px;font-size:11.5px">up</div>
<div class="t" style="left:1268.9px;top:703px;font-size:11.5px">up</div>
<div class="t" style="left:1441.5px;top:703px;font-size:11.5px">1503</div>
<div class="t" style="left:1614.1px;top:703px;font-size:11.5px">Vlan200 is up, line protocol</div>
<div class="a" style="left:914px;top:724px;width:860px;height:1px;background:#e3e3e3"></div>
<div class="a" style="left:1774px;top:493px;width:19px;height:240px;background:#fafafa"></div>
<svg class="a" style="left:1779px;top:503px" width="10" height="6"><path d="M0 6 L5 0 L10 6 Z" fill="#888"/></svg>
<div class="a" style="left:1778px;top:516px;width:11px;height:33px;background:#8a8a8a;border-radius:6px"></div>
<svg class="a" style="left:1779px;top:695px" width="10" height="6"><path d="M0 0 L5 6 L10 0 Z" fill="#888"/></svg>
<div class="a" style="left:914px;top:711px;width:860px;height:20px;background:#f8f8f8"></div>
<svg class="a" style="left:923px;top:716px" width="6" height="10"><path d="M6 0 L0 5 L6 10 Z" fill="#888"/></svg>
<div class="a" style="left:937px;top:715px;width:811px;height:12px;background:#8a8a8a;border-radius:6px"></div>
<svg class="a" style="left:1759px;top:716px" width="6" height="10"><path d="M0 0 L6 5 L0 10 Z" fill="#888"/></svg>

</body></html>
